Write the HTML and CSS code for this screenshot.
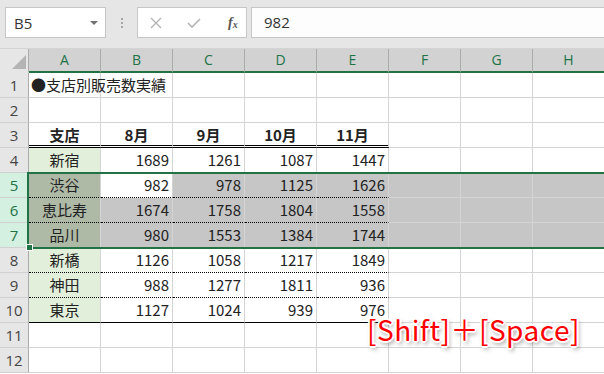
FILE: index.html
```html
<!doctype html>
<html lang="ja">
<head>
  <meta charset="UTF-8">
  <title>支店別販売数実績</title>
  <link rel="stylesheet" href="styles.css">
</head>
<body>
<div class="app">

  <div class="toolbar">
    <div class="namebox">
      <span>B5</span>
      <span class="arrow"></span>
    </div>
    <div class="grip"><i></i><i></i><i></i></div>
    <div class="buttons">
      <svg width="14" height="14" viewBox="0 0 14 14"><path d="M2 2 L12 12 M12 2 L2 12" stroke="#b4b4b4" stroke-width="1.4" fill="none"/></svg>
      <svg width="16" height="14" viewBox="0 0 16 14"><path d="M2 7 L6 11 L14 3" stroke="#b4b4b4" stroke-width="1.6" fill="none"/></svg>
      <span class="fx">f<sub>x</sub></span>
    </div>
    <div class="formula">982</div>
  </div>

  <div class="sheet">
    <div class="corner"><span></span></div>
    <div class="colhead">A</div>
    <div class="colhead">B</div>
    <div class="colhead">C</div>
    <div class="colhead">D</div>
    <div class="colhead">E</div>
    <div class="colhead">F</div>
    <div class="colhead">G</div>
    <div class="colhead">H</div>

    <div class="rowhead">1</div>
    <div class="c title">●支店別販売数実績</div>
    <div class="c"></div><div class="c"></div><div class="c"></div><div class="c"></div><div class="c"></div><div class="c"></div><div class="c"></div>

    <div class="rowhead">2</div>
    <div class="c"></div><div class="c"></div><div class="c"></div><div class="c"></div><div class="c"></div><div class="c"></div><div class="c"></div><div class="c"></div>

    <div class="rowhead">3</div>
    <div class="c th dbl">支店</div>
    <div class="c th dbl">8月</div>
    <div class="c th dbl">9月</div>
    <div class="c th dbl">10月</div>
    <div class="c th dbl">11月</div>
    <div class="c"></div><div class="c"></div><div class="c"></div>

    <div class="rowhead">4</div>
    <div class="c name dot">新宿</div>
    <div class="c num dot">1689</div>
    <div class="c num dot">1261</div>
    <div class="c num dot">1087</div>
    <div class="c num dot">1447</div>
    <div class="c"></div><div class="c"></div><div class="c"></div>

    <div class="rowhead on">5</div>
    <div class="c name sel dot">渋谷</div>
    <div class="c num dot active">982</div>
    <div class="c num sel dot">978</div>
    <div class="c num sel dot">1125</div>
    <div class="c num sel dot">1626</div>
    <div class="c sel"></div><div class="c sel"></div><div class="c sel"></div>

    <div class="rowhead on">6</div>
    <div class="c name sel dot">恵比寿</div>
    <div class="c num sel dot">1674</div>
    <div class="c num sel dot">1758</div>
    <div class="c num sel dot">1804</div>
    <div class="c num sel dot">1558</div>
    <div class="c sel"></div><div class="c sel"></div><div class="c sel"></div>

    <div class="rowhead on">7</div>
    <div class="c name sel dot">品川</div>
    <div class="c num sel dot">980</div>
    <div class="c num sel dot">1553</div>
    <div class="c num sel dot">1384</div>
    <div class="c num sel dot">1744</div>
    <div class="c sel"></div><div class="c sel"></div><div class="c sel"></div>

    <div class="rowhead">8</div>
    <div class="c name dot">新橋</div>
    <div class="c num dot">1126</div>
    <div class="c num dot">1058</div>
    <div class="c num dot">1217</div>
    <div class="c num dot">1849</div>
    <div class="c"></div><div class="c"></div><div class="c"></div>

    <div class="rowhead">9</div>
    <div class="c name dot">神田</div>
    <div class="c num dot">988</div>
    <div class="c num dot">1277</div>
    <div class="c num dot">1811</div>
    <div class="c num dot">936</div>
    <div class="c"></div><div class="c"></div><div class="c"></div>

    <div class="rowhead">10</div>
    <div class="c name end">東京</div>
    <div class="c num end">1127</div>
    <div class="c num end">1024</div>
    <div class="c num end">939</div>
    <div class="c num end">976</div>
    <div class="c"></div><div class="c"></div><div class="c"></div>

    <div class="rowhead">11</div>
    <div class="c"></div><div class="c"></div><div class="c"></div><div class="c"></div><div class="c"></div><div class="c"></div><div class="c"></div><div class="c"></div>

    <div class="rowhead">12</div>
    <div class="c"></div><div class="c"></div><div class="c"></div><div class="c"></div><div class="c"></div><div class="c"></div><div class="c"></div><div class="c"></div>

    <!-- row 5-7 selection outline -->
    <div class="selection"><span class="handle"></span></div>
  </div>

  <div class="caption">[Shift]＋[Space]</div>
</div>
</body>
</html>
```

FILE: styles.css
```css
body {
  margin: 0;
  background: #fff;
  font-family: "Noto Sans CJK JP", "Noto Sans", sans-serif;
}

.app {
  position: relative;
  width: 604px;
  height: 374px;
  overflow: hidden;
}

/* formula bar */
.toolbar {
  height: 49px;
  box-sizing: border-box;
  background: #e6e6e6;
  display: flex;
  align-items: flex-start;
  padding-top: 7px;
  padding-left: 5px;
  border-bottom: 1px solid #d4d4d4;
}

.namebox {
  width: 101px;
  height: 31px;
  box-sizing: border-box;
  background: #fff;
  border: 1px solid #c6c6c6;
  display: flex;
  align-items: center;
  justify-content: space-between;
  padding: 0 7px 0 8px;
  font-family: "Open Sans", "Liberation Sans", sans-serif;
  font-size: 15px;
  color: #333;
}

.namebox .arrow {
  width: 0;
  height: 0;
  border-left: 4px solid transparent;
  border-right: 4px solid transparent;
  border-top: 4px solid #707070;
}

.grip {
  width: 31px;
  height: 31px;
  display: flex;
  flex-direction: column;
  align-items: center;
  justify-content: center;
  gap: 2px;
}

.grip i {
  width: 2px;
  height: 2px;
  background: #a6a6a6;
}

.buttons {
  width: 110px;
  height: 31px;
  box-sizing: border-box;
  background: #fff;
  border: 1px solid #c6c6c6;
  display: flex;
  align-items: center;
  padding-left: 11px;
  gap: 23px;
}

.fx {
  font-family: "Liberation Serif", serif;
  font-style: italic;
  font-weight: bold;
  font-size: 14px;
  color: #555;
  margin-left: 3px;
}

.fx sub {
  font-size: 10px;
  vertical-align: -1px;
}

.formula {
  flex: 1;
  height: 31px;
  box-sizing: border-box;
  margin-left: 4px;
  background: #fdfdfd;
  border: 1px solid #c6c6c6;
  border-right: 0;
  padding-left: 12px;
  line-height: 29px;
  font-family: "Open Sans", "Liberation Sans", sans-serif;
  font-size: 15px;
  color: #333;
}

/* grid */
.sheet {
  position: relative;
  display: grid;
  grid-template-columns: 29px repeat(8, 72px);
  grid-template-rows: 24px;
  grid-auto-rows: 25px;
}

.corner {
  background: #e6e6e6;
  border-right: 1px solid #ababab;
  border-bottom: 2px solid #e6e6e6;
  position: relative;
}

.corner span {
  position: absolute;
  right: 2px;
  bottom: 2px;
  width: 0;
  height: 0;
  border-left: 14px solid transparent;
  border-bottom: 14px solid #b4b4b4;
}

.colhead {
  background: #d2d2d2;
  border-right: 1px solid #ababab;
  border-bottom: 2px solid #217346;
  color: #217346;
  font-family: "Open Sans", "Liberation Sans", sans-serif;
  font-size: 14px;
  text-align: center;
  line-height: 22px;
}

.rowhead {
  box-sizing: border-box;
  background: #e6e6e6;
  border-right: 1px solid #ababab;
  border-bottom: 1px solid #d0d0d0;
  color: #444;
  font-family: "Open Sans", "Liberation Sans", sans-serif;
  font-size: 15px;
  text-align: center;
  line-height: 24px;
}

.rowhead.on {
  background: #d3f0e0;
  color: #217346;
}

.c {
  box-sizing: border-box;
  border-right: 1px solid #d4d4d4;
  border-bottom: 1px solid #d4d4d4;
  font-size: 15px;
  line-height: 23px;
  color: #222;
  white-space: nowrap;
}

.title {
  padding-left: 2px;
  overflow: visible;
  position: relative;
  z-index: 1;
}

.th {
  font-weight: bold;
  text-align: center;
}

.name {
  text-align: center;
  background: #e2efda;
}

.num {
  text-align: right;
  padding-right: 3px;
}

.dbl {
  border-bottom: 3px double #000;
}

.dot {
  border-bottom: 1px dotted #000;
}

.end {
  border-bottom: 1px solid #000;
}

.sel {
  background: #c6c6c6;
}

.name.sel {
  background: #aeb9a6;
}

.active {
  background: #fff;
}

.selection {
  position: absolute;
  left: 27px;
  top: 123px;
  width: 600px;
  height: 77px;
  border: 2px solid #217346;
  box-sizing: border-box;
  pointer-events: none;
}

.handle {
  position: absolute;
  left: -3px;
  bottom: -4px;
  width: 5px;
  height: 5px;
  background: #217346;
  border: 1px solid #fff;
}

.caption {
  position: absolute;
  left: 367px;
  top: 309px;
  font-family: "Noto Sans CJK JP", sans-serif;
  font-size: 28px;
  line-height: 40px;
  color: #f00;
  letter-spacing: 0.5px;
  text-shadow:
    -1px -1px 0 #fff, 1px -1px 0 #fff, -1px 1px 0 #fff, 1px 1px 0 #fff,
    0 -2px 0 #fff, 0 2px 0 #fff, -2px 0 0 #fff, 2px 0 0 #fff,
    2px 3px 4px rgba(0, 0, 0, 0.5);
}
```
